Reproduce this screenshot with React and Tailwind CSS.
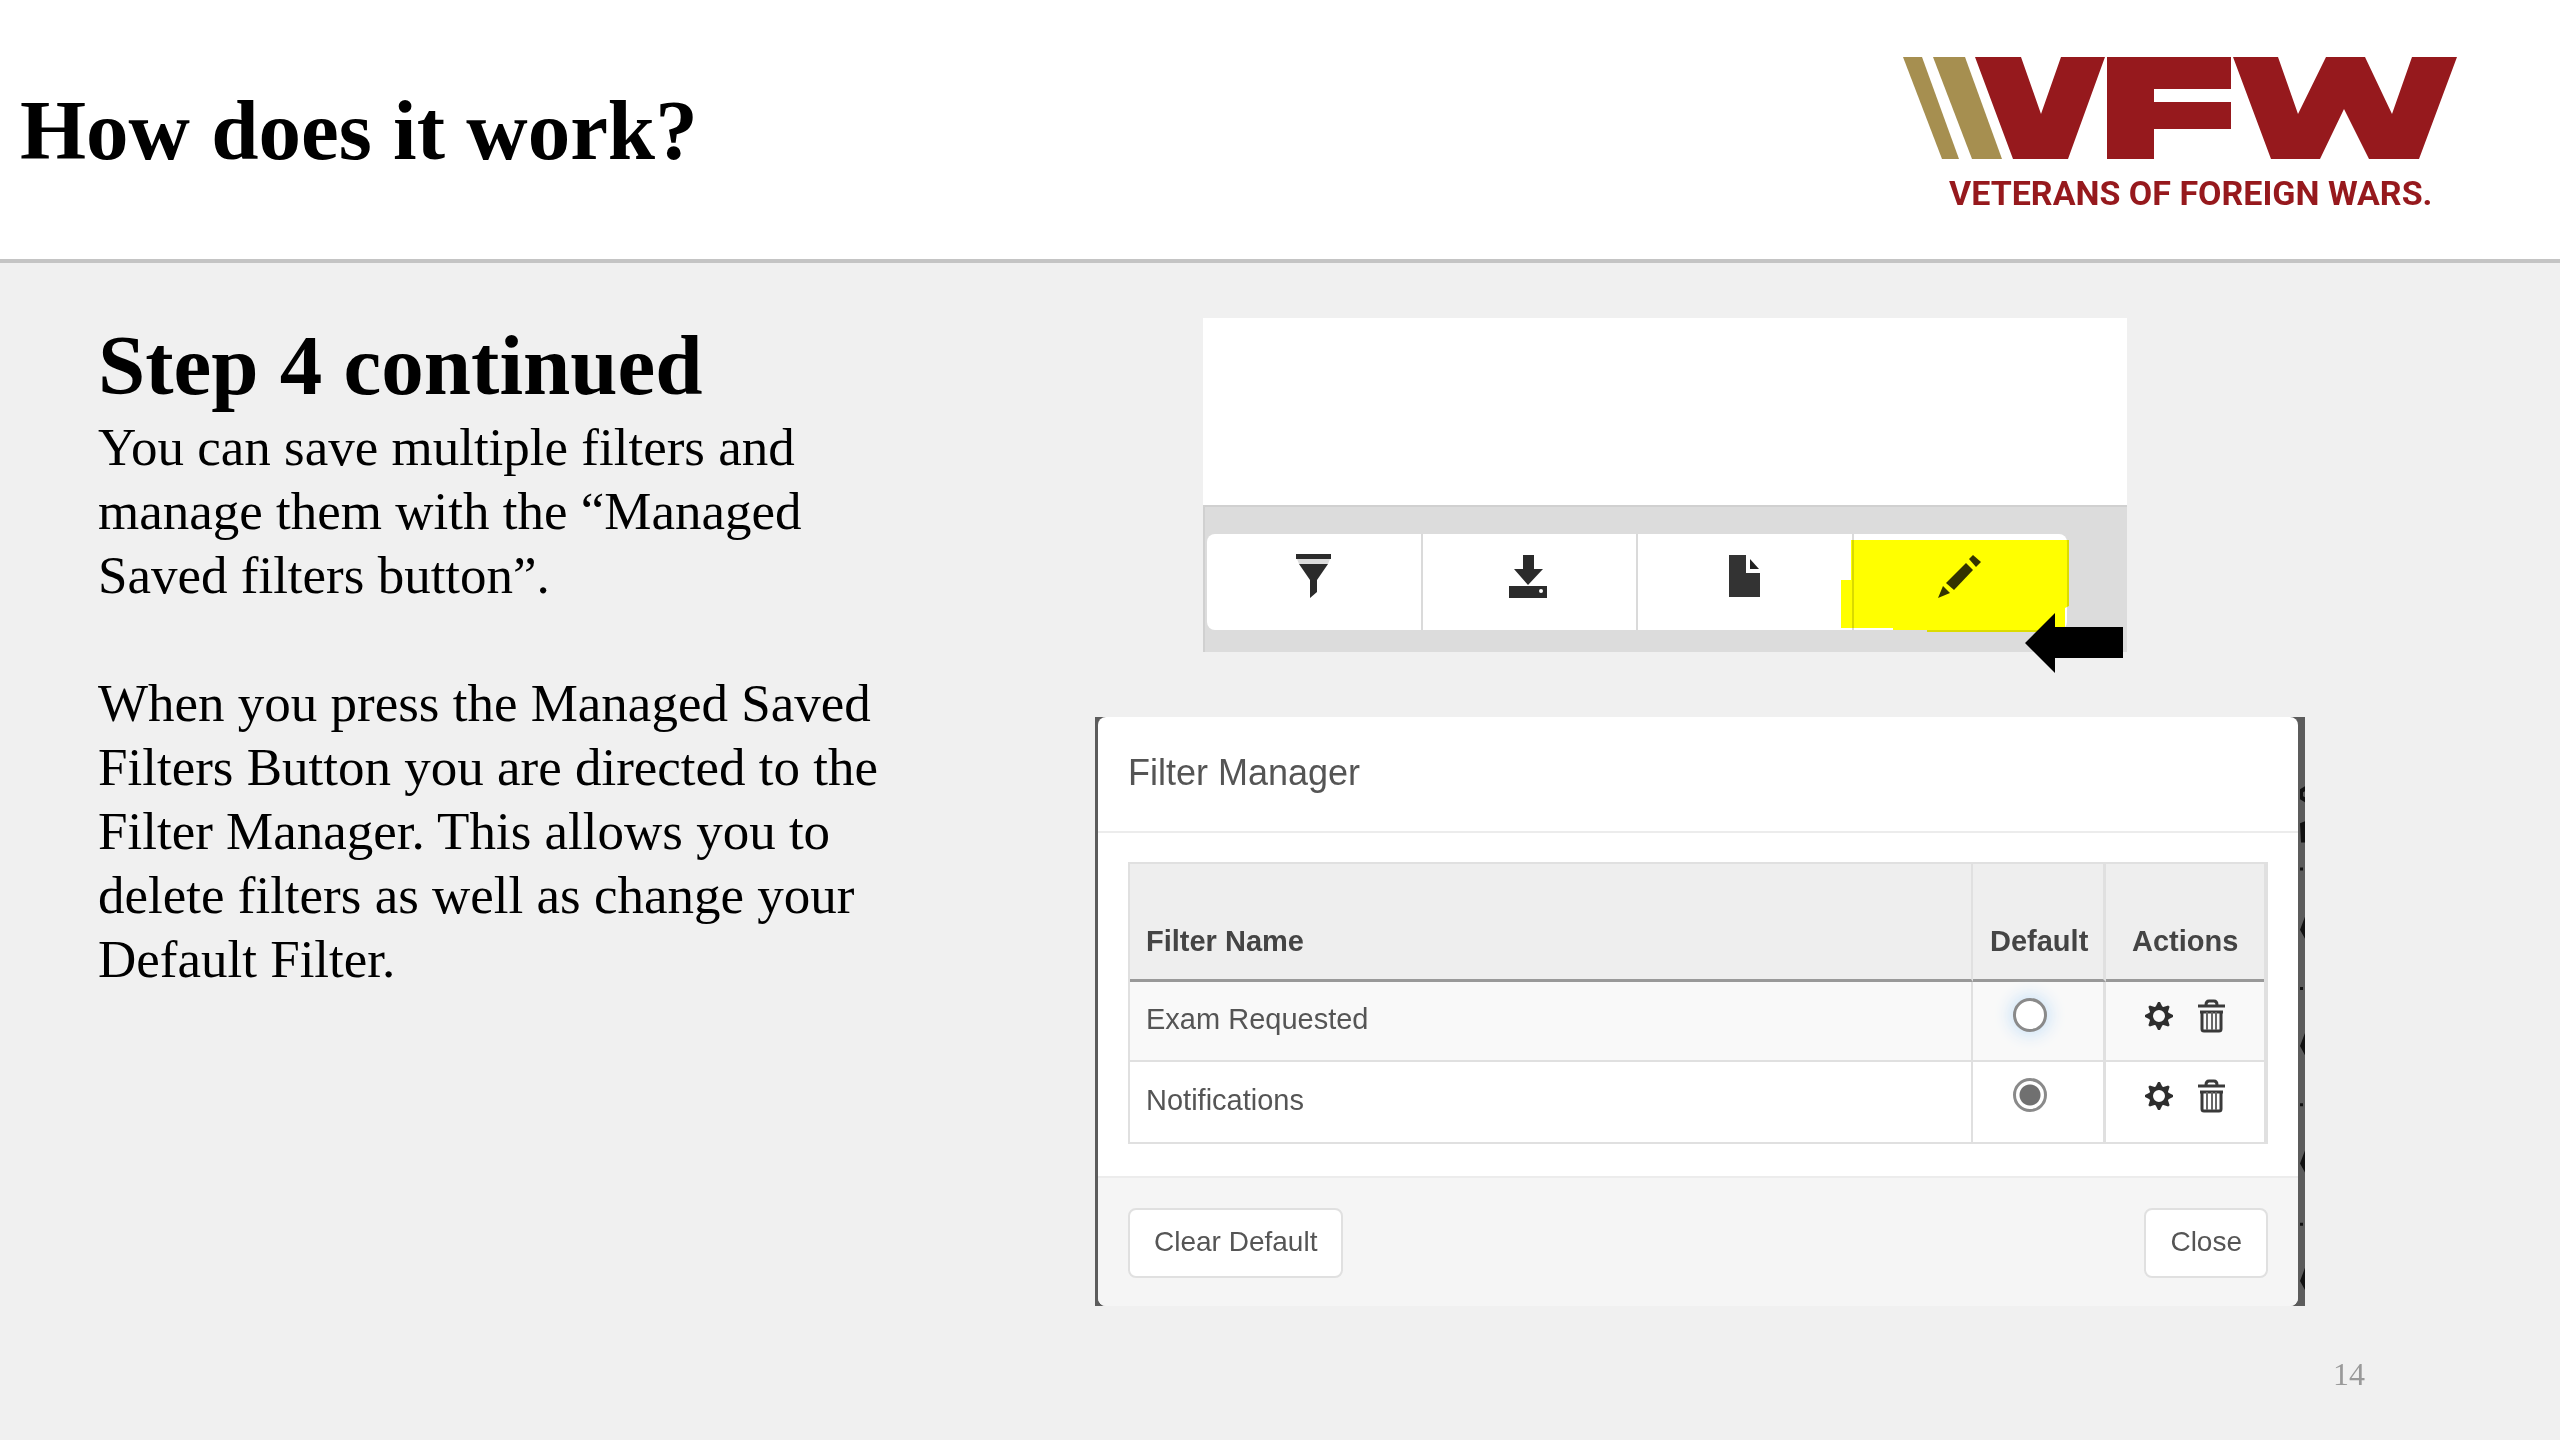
import React, { useState } from "react";

const filters = [
  { id: "exam-requested", name: "Exam Requested" },
  { id: "notifications", name: "Notifications" },
];

function Logo() {
  return (
    <div className="w-[554px]">
      <svg viewBox="0 0 554 102" className="block w-full" aria-hidden="true">
        <g fill="#a68f50">
          <path d="M0 0h19l37 102H39z" />
          <path d="M30 0h32l37 102H69z" />
        </g>
        <g fill="#96191d">
          <path d="M72 0h46l20 57 20-57h44l-37 102h-55z" />
          <path d="M204 0h124v32h-77v13h77v27h-77v30h-47z" />
          <path d="M330 0h45l20 57 28-57h39l27 57 20-57h45l-38 102h-50l-25-50-24 50h-49z" />
        </g>
      </svg>
      <p className="mt-3.5 pl-[46px] font-['Roboto','Liberation_Sans',sans-serif] text-[34px] leading-10 font-bold whitespace-nowrap text-[#96191d]">
        VETERANS OF FOREIGN WARS.
      </p>
    </div>
  );
}

function FilterIcon() {
  return (
    <svg viewBox="0 0 36 44" className="h-11 w-9" aria-hidden="true">
      <path d="M0 0h35v5H0z" fill="#2b2b2b" />
      <path d="M1 5h33l-2 5H3z" fill="#dcdcdc" />
      <path d="M3 10h29L21 26v12l-7 6V26z" fill="#2b2b2b" />
    </svg>
  );
}

function DownloadIcon() {
  return (
    <svg viewBox="0 0 40 44" className="h-11 w-10" aria-hidden="true">
      <path d="M14 1h11v14h9L19 31 5 15h9z" fill="#2b2b2b" />
      <path d="M0 32h38v12H0z" fill="#2b2b2b" />
      <circle cx="32" cy="37" r="2" fill="#fff" />
    </svg>
  );
}

function FileIcon() {
  return (
    <svg viewBox="0 0 32 44" className="h-11 w-8" aria-hidden="true">
      <path d="M0 1h17v18h14v24H0z" fill="#333" />
      <path d="M21 5l9 10h-9z" fill="#222" />
    </svg>
  );
}

function PencilIcon() {
  return (
    <svg viewBox="0 0 44 44" className="size-11" aria-hidden="true">
      <g fill="#33330a">
        <path d="M35 1l8 7-5 5-7-8z" />
        <path d="M28 9l7 7-19 20-8-7z" />
        <path d="M5 32l7 7-12 5z" />
      </g>
    </svg>
  );
}

function GearIcon() {
  return (
    <svg viewBox="0 0 28 28" className="size-7" fill="#2e2e2e" aria-hidden="true">
      {[0, 45, 90, 135, 180, 225, 270, 315].map((angle) => (
        <path key={angle} d="M10 6l3-6h2l3 6z" transform={`rotate(${angle} 14 14)`} />
      ))}
      <circle cx="14" cy="14" r="8" fill="none" stroke="#2e2e2e" strokeWidth="4" />
    </svg>
  );
}

function TrashIcon() {
  return (
    <svg viewBox="0 0 27 34" className="h-[34px] w-[27px]" fill="none" stroke="#3a3a3a" aria-hidden="true">
      <path d="M8 6q0-4 3-4h5q3 0 3 4" strokeWidth="3" />
      <path d="M0 7h27" strokeWidth="3" />
      <path d="M2 13h23" strokeWidth="3" />
      <path d="M4 12v18q0 2 2 2h15q2 0 2-2V12" strokeWidth="3" />
      <path d="M9 13v18M14 13v18M18 13v18" strokeWidth="2" stroke="#666" />
    </svg>
  );
}

// yellow marker drawn over the last toolbar button
function Highlight() {
  return (
    <svg
      viewBox="0 0 228 92"
      className="absolute -right-0.5 -bottom-0.5 h-[92px] w-[228px] mix-blend-multiply"
      aria-hidden="true"
    >
      <path d="M10 0h218v66l-4 2v24H86v-2H52v-2H0V40h10z" fill="#ff0" />
    </svg>
  );
}

function ToolbarFigure() {
  const button =
    "flex h-24 flex-1 items-start justify-center border-r-2 border-[#dadada] bg-white pt-5";

  return (
    <div className="relative mr-[178px] ml-27">
      <div className="h-[187px] bg-white" />
      <div className="border-t-2 border-l-2 border-[#d0d0d0] bg-[#dcdcdc] pt-[27px] pr-[60px] pb-[22px] pl-0.5">
        <div className="relative flex">
          <button type="button" aria-label="Filter" className={`${button} rounded-l-lg`}>
            <FilterIcon />
          </button>
          <button type="button" aria-label="Download" className={button}>
            <DownloadIcon />
          </button>
          <button type="button" aria-label="New file" className={button}>
            <FileIcon />
          </button>
          <button
            type="button"
            aria-label="Managed saved filters"
            className="flex h-24 flex-1 items-start justify-center rounded-r-lg bg-white pt-5"
          >
            <PencilIcon />
          </button>
          <Highlight />
        </div>
      </div>
      <svg
        viewBox="0 0 98 60"
        className="absolute right-1 -bottom-[21px] h-[60px] w-[98px]"
        aria-hidden="true"
      >
        <path d="M0 30L30 0v14h68v31H30v15z" fill="#000" />
      </svg>
    </div>
  );
}

function FilterManager() {
  const [defaultFilter, setDefaultFilter] = useState("notifications");

  const radioClass =
    "block size-[34px] appearance-none rounded-full border-[3px] border-[#8a8a8a] bg-white checked:bg-[radial-gradient(circle,#707070_10px,white_11px)]";

  return (
    <div className="relative bg-[#5c5c5c] pr-[7px] pl-[3px] font-['Liberation_Sans',Arial,sans-serif] text-[#555]">
      {/* bits of the dimmed page showing past the dialog edge */}
      <svg
        viewBox="0 0 7 587"
        className="absolute top-0 right-0 h-full w-[7px]"
        preserveAspectRatio="none"
        fill="#111"
        aria-hidden="true"
      >
        <path d="M7 69L2 72v10l5 3v-5l-2-1v-4l2-1z" />
        <path d="M2 106l5-2v21H3z" />
        <path d="M2 150h3v3H2zM2 269h3v3H2zM2 385h3v3H2zM2 504h3v3H2z" />
        <path d="M7 199v22l-5-9zM7 315v22l-5-9zM7 432v22l-5-9zM7 549v22l-5-9z" />
      </svg>

      <div className="overflow-hidden rounded-lg bg-white">
        <div className="border-b-2 border-[#ececec] px-[30px] pt-8 pb-[34px]">
          <h3 className="text-[36px] leading-12">Filter Manager</h3>
        </div>

        <div className="px-[30px] pt-[29px] pb-8">
          <table className="w-full border-separate border-spacing-0 border-t-2 border-r-4 border-b-2 border-l-2 border-[#e0e0e0] text-left text-[29px] leading-9">
            <thead className="bg-[#eee] text-[#444]">
              <tr>
                <th className="h-[118px] border-r-2 border-b-3 border-r-[#e0e0e0] border-b-[#999] pb-5 pl-4 align-bottom">
                  Filter Name
                </th>
                <th className="w-[133px] border-r-3 border-b-3 border-r-[#e0e0e0] border-b-[#999] pb-5 pl-[17px] align-bottom">
                  Default
                </th>
                <th className="w-[158px] border-b-3 border-[#999] pb-5 pl-[26px] align-bottom">
                  Actions
                </th>
              </tr>
            </thead>
            <tbody>
              {filters.map((filter) => (
                <tr key={filter.id} className="group odd:bg-[#f9f9f9]">
                  <td className="h-20 border-r-2 border-b-2 border-[#e0e0e0] pb-1 pl-4 group-last:border-b-0">
                    <label htmlFor={filter.id}>{filter.name}</label>
                  </td>
                  <td className="border-r-3 border-b-2 border-[#e0e0e0] pt-4 pl-10 align-top group-last:border-b-0">
                    <input
                      id={filter.id}
                      type="radio"
                      name="default-filter"
                      checked={defaultFilter === filter.id}
                      onChange={() => setDefaultFilter(filter.id)}
                      className={
                        filter.id === "exam-requested"
                          ? `${radioClass} shadow-[0_0_16px_4px_#cfe5f8]`
                          : radioClass
                      }
                    />
                  </td>
                  <td className="border-b-2 border-[#e0e0e0] pt-[17px] pl-[39px] align-top group-last:border-b-0">
                    <div className="flex items-center gap-[25px]">
                      <button type="button" aria-label={`Edit ${filter.name}`}>
                        <GearIcon />
                      </button>
                      <button type="button" aria-label={`Delete ${filter.name}`}>
                        <TrashIcon />
                      </button>
                    </div>
                  </td>
                </tr>
              ))}
            </tbody>
          </table>
        </div>

        <div className="flex justify-between border-t-2 border-[#ececec] bg-[#f5f5f5] px-[30px] pt-[30px] pb-7 text-[28px] leading-9">
          <button
            type="button"
            onClick={() => setDefaultFilter("")}
            className="rounded-lg border-2 border-[#e0e0e0] bg-white px-6 pt-3.5 pb-4"
          >
            Clear Default
          </button>
          <button
            type="button"
            className="rounded-lg border-2 border-[#e0e0e0] bg-white px-6 pt-3.5 pb-4"
          >
            Close
          </button>
        </div>
      </div>
    </div>
  );
}

function App() {
  return (
    <div className="flex min-h-screen flex-col bg-[#f0f0f0] font-['Liberation_Serif','Times_New_Roman',serif] text-black">
      <header className="flex items-center justify-between border-b-4 border-[#c4c4c4] bg-white pr-[103px] pl-5">
        <h1 className="text-[85px] leading-[100px] font-bold">How does it work?</h1>
        <div className="pt-[57px] pb-[46px]">
          <Logo />
        </div>
      </header>

      <main className="grid flex-1 grid-cols-[1095fr_1210fr] pt-13 pr-[255px]">
        <section className="max-w-[900px] pl-[98px]">
          <h2 className="text-[85px] leading-[100px] font-bold">Step 4 continued</h2>
          <div className="space-y-16 text-[53px] leading-16">
            <p>
              You can save multiple filters and manage them with the “Managed Saved filters button”.
            </p>
            <p>
              When you press the Managed Saved Filters Button you are directed to the Filter Manager.
              This allows you to delete filters as well as change your Default Filter.
            </p>
          </div>
        </section>

        <section className="flex flex-col gap-[65px] pt-[3px]">
          <ToolbarFigure />
          <FilterManager />
        </section>
      </main>

      <footer className="pr-[195px] pb-[46px] text-right text-[32px] leading-10 text-[#999]">
        14
      </footer>
    </div>
  );
}

export default App;
